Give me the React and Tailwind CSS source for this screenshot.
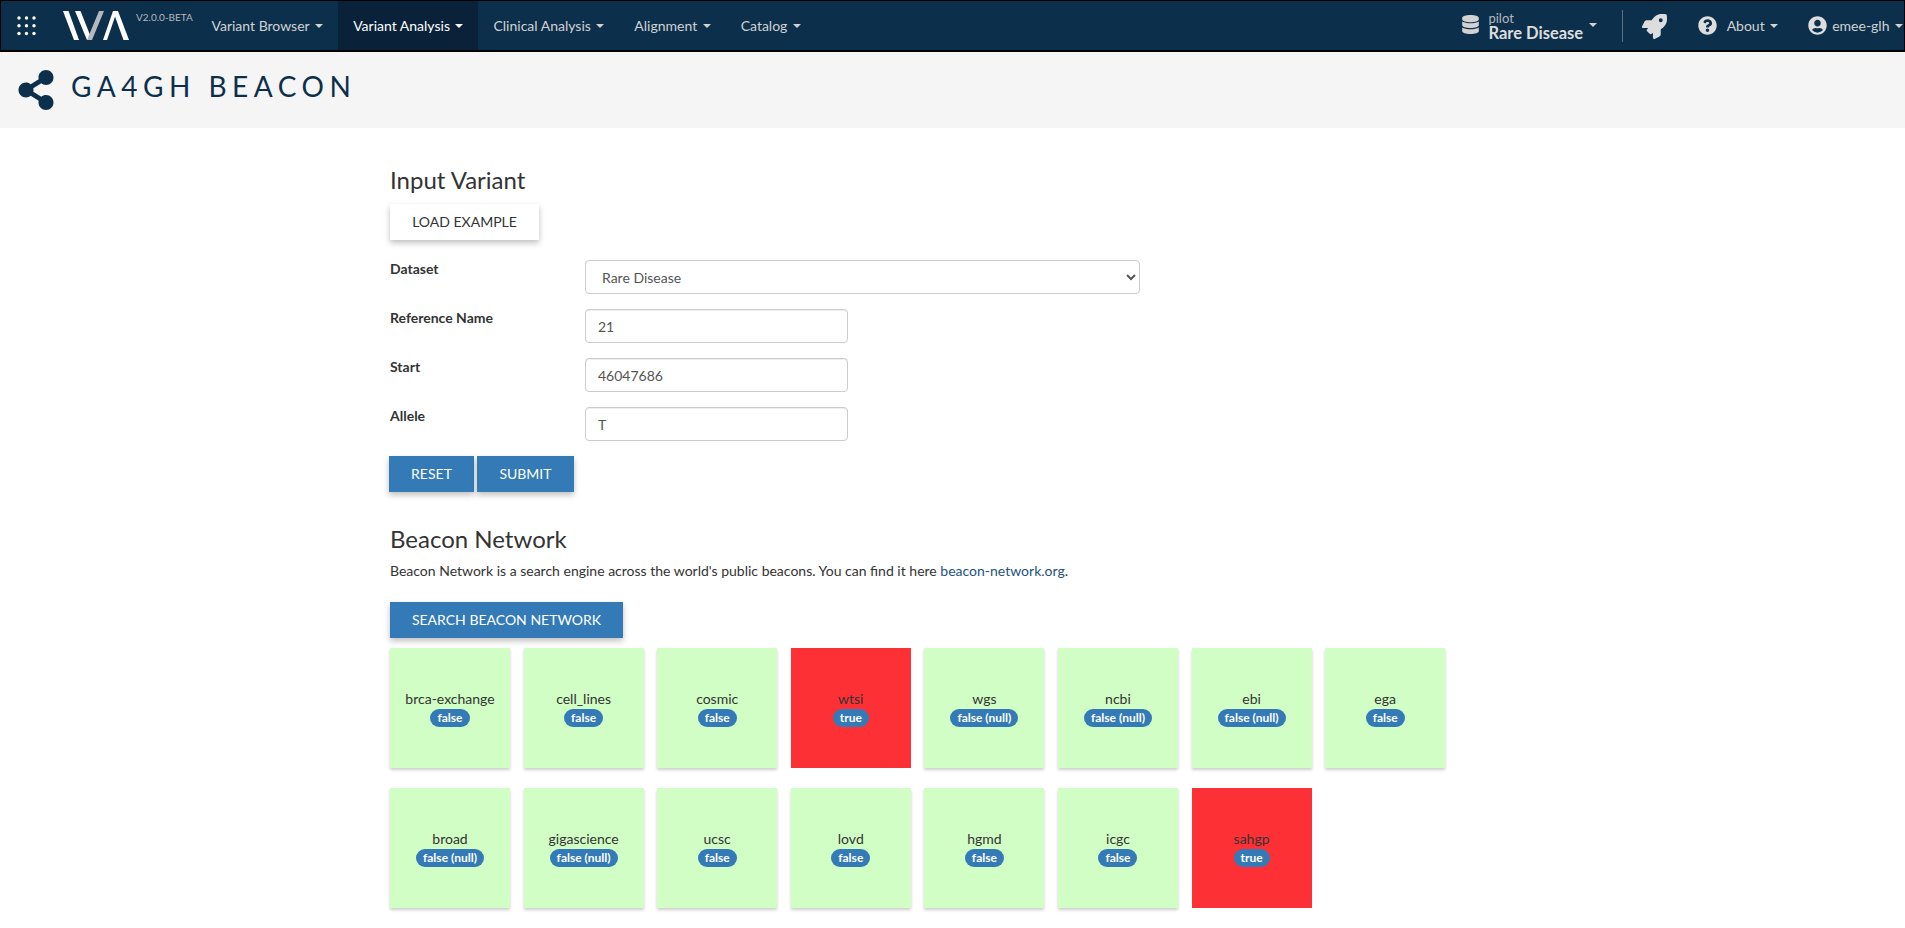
import React from "react";
import { FaShareAlt, FaDatabase, FaRocket, FaQuestionCircle, FaUserCircle } from "react-icons/fa";

const navItems = ["Variant Browser", "Variant Analysis", "Clinical Analysis", "Alignment", "Catalog"];

const row1 = [
  ["brca-exchange", "false"],
  ["cell_lines", "false"],
  ["cosmic", "false"],
  ["wtsi", "true"],
  ["wgs", "false (null)"],
  ["ncbi", "false (null)"],
  ["ebi", "false (null)"],
  ["ega", "false"],
];

const row2 = [
  ["broad", "false (null)"],
  ["gigascience", "false (null)"],
  ["ucsc", "false"],
  ["lovd", "false"],
  ["hgmd", "false"],
  ["icgc", "false"],
  ["sahgp", "true"],
];

const Caret = ({ className = "" }) => (
  <span className={`inline-block w-0 h-0 border-x-4 border-x-transparent border-t-4 border-t-current ml-[5.5px] ${className}`} />
);

const Logo = () => (
  <svg width="68" height="30" viewBox="0 0 68 30" className="block">
    <polygon points="0,0 5.5,0 16,29 11,29" fill="#fff" />
    <polygon points="12,0 17.5,0 29,29 24,29" fill="#fff" />
    <polygon points="24,29 29,29 41,0 36,0" fill="#b5b9bd" />
    <polygon points="40,29 44,29 54,0 50,0" fill="#fff" />
    <polygon points="50,0 55,0 66,29 60.5,29" fill="#fff" />
  </svg>
);

const GridIcon = () => (
  <svg width="20" height="20" viewBox="0 0 20 20" fill="#fff" className="block">
    {[2, 9.8, 17.5].map((y) =>
      [2, 9.5, 17].map((x) => <circle key={`${x}-${y}`} cx={x} cy={y} r="1.7" />)
    )}
  </svg>
);

const TextInput = ({ value }) => (
  <input
    readOnly
    value={value}
    className="w-[263px] h-[34px] px-3 border border-[#ccc] rounded-[4px] text-sm text-[#555] bg-white shadow-[inset_0_1px_1px_rgba(0,0,0,0.075)]"
  />
);

const BeaconCard = ({ name, result }) => (
  <div
    className={`w-[120px] h-[120px] flex flex-col items-center justify-center text-sm text-[#333] ${
      result === "true" ? "bg-[#fd3135]" : "bg-[#d0fec4] shadow-[0_2px_3px_rgba(0,0,0,0.2)]"
    }`}
  >
    <span className="leading-5">{name}</span>
    <span className="bg-[#337ab7] text-white text-xs font-bold leading-3 px-[7px] py-[3px] rounded-[10px]">{result}</span>
  </div>
);

export default function App() {
  return (
    <div className="min-h-[928px] bg-white font-['Lato','Open_Sans',sans-serif] text-sm text-[#333]">
      {/* Navbar */}
      <nav className="h-[52px] flex items-stretch bg-[#0c2f4c] border border-black border-b-2 text-[#d2d2d2] text-sm">
        <div className="w-9 flex items-center justify-end">
          <GridIcon />
        </div>
        <div className="ml-[26px] flex items-center">
          <Logo />
        </div>
        <div className="w-[65.5px] pl-[5px] pt-[10px] text-[10px] leading-3 text-[#b5b9bd]">V2.0.0-BETA</div>
        {navItems.map((item) => (
          <div
            key={item}
            className={`flex items-center px-[15px] ${item === "Variant Analysis" ? "bg-[#0a2239] text-white" : ""}`}
          >
            {item}
            <Caret />
          </div>
        ))}

        <div className="ml-auto flex items-center">
          <FaDatabase className="text-[#d2d2d2] text-[19px] -mt-[3px]" />
          <div className="ml-2 pt-[2px] flex flex-col">
            <span className="text-[13px] leading-3 text-[#b5b9bd]">pilot</span>
            <span className="text-[16.5px] leading-[18px] font-bold text-[#ddd]">Rare Disease</span>
          </div>
          <Caret className="-mt-[2px]" />
          <div className="w-px h-8 bg-[#5a7184] ml-[25px]" />
          <FaRocket className="ml-[19px] mt-px text-[25px] text-[#ddd]" />
          <FaQuestionCircle className="ml-[31px] text-[19px] text-[#ddd]" />
          <span className="ml-[10px]">About</span>
          <Caret />
          <FaUserCircle className="ml-[30px] text-[19px] text-[#ddd]" />
          <span className="ml-[5px]">emee-glh</span>
          <Caret className="mr-px" />
        </div>
      </nav>

      {/* Page title */}
      <div className="h-[76px] bg-[#f5f5f5] flex items-center pl-4">
        <FaShareAlt className="text-[#0c2f4c] text-[40px]" />
        <h1 className="ml-[15px] -mt-2 text-[28px] tracking-[5.5px] text-[#0c2f4c] leading-none">GA4GH BEACON</h1>
      </div>

      {/* Form */}
      <div className="pl-[390px] pt-[39px]">
        <h3 className="text-2xl leading-[26px]">Input Variant</h3>
        <button className="mt-[11px] h-9 w-[149px] bg-white text-sm text-[#333] uppercase shadow-[0_3px_6px_rgba(0,0,0,0.25)]">
          Load example
        </button>

        <div className="mt-5 flex flex-col gap-[15px]">
          <div className="flex">
            <label className="w-[195px] font-bold leading-[18px]">Dataset</label>
            <select className="w-[555px] h-[34px] px-3 border border-[#ccc] rounded-[4px] text-sm text-[#555] bg-white">
              <option>Rare Disease</option>
            </select>
          </div>
          <div className="flex">
            <label className="w-[195px] font-bold leading-[18px]">Reference Name</label>
            <TextInput value="21" />
          </div>
          <div className="flex">
            <label className="w-[195px] font-bold leading-[18px]">Start</label>
            <TextInput value="46047686" />
          </div>
          <div className="flex">
            <label className="w-[195px] font-bold leading-[18px]">Allele</label>
            <TextInput value="T" />
          </div>
        </div>

        <div className="mt-[15px] -ml-px flex gap-[3px]">
          <button className="h-9 w-[85px] bg-[#337ab7] text-white text-sm uppercase shadow-[0_3px_6px_rgba(0,0,0,0.25)]">Reset</button>
          <button className="h-9 w-[97px] bg-[#337ab7] text-white text-sm uppercase shadow-[0_3px_6px_rgba(0,0,0,0.25)]">Submit</button>
        </div>

        {/* Beacon network */}
        <h3 className="mt-[34px] text-2xl leading-[26px]">Beacon Network</h3>
        <p className="mt-[9px] leading-5">
          Beacon Network is a search engine across the world's public beacons. You can find it here{" "}
          <a className="text-[#23527c]">beacon-network.org</a>.
        </p>
        <button className="mt-[21px] h-9 w-[233px] bg-[#337ab7] text-white text-sm uppercase shadow-[0_3px_6px_rgba(0,0,0,0.25)]">
          Search Beacon Network
        </button>

        <div className="mt-[10px] flex flex-col gap-5">
          <div className="flex gap-[13.6px]">
            {row1.map(([name, result]) => (
              <BeaconCard key={name} name={name} result={result} />
            ))}
          </div>
          <div className="flex gap-[13.6px]">
            {row2.map(([name, result]) => (
              <BeaconCard key={name} name={name} result={result} />
            ))}
          </div>
        </div>
      </div>
    </div>
  );
}
